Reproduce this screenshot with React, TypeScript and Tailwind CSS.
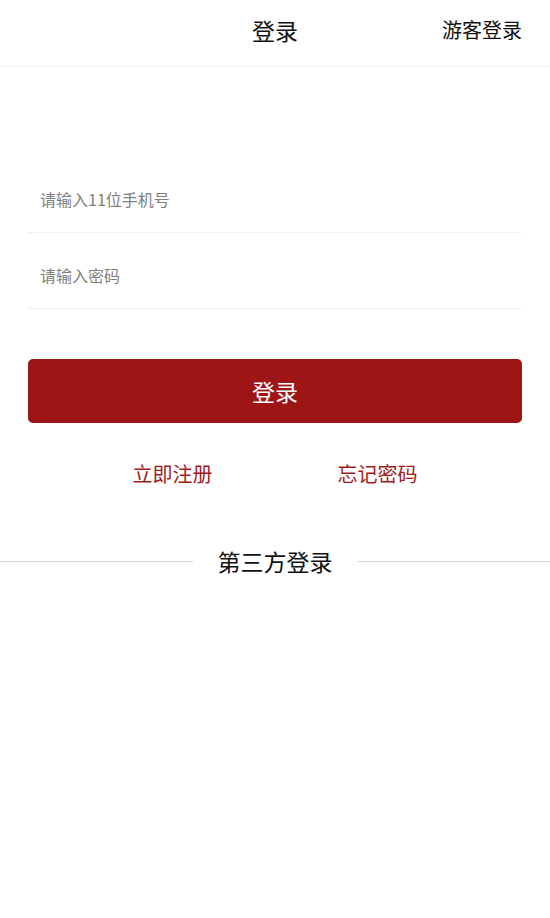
import React from "react";

export default function App() {
  const font = { fontFamily: '"Noto Sans CJK SC", "Noto Sans", sans-serif' };
  return (
    <div className="w-[550px] h-[918px] bg-white text-black" style={font}>
      <div className="h-[67px] border-b border-[#f2f2f2] relative flex items-start justify-center pt-[15px]">
        <span className="text-[23px] leading-[30px] text-[#111]">登录</span>
        <span className="absolute right-[28px] top-[15px] text-[20px] leading-[30px] text-[#111]">游客登录</span>
      </div>
      <div className="px-[28px]">
        <div className="mt-[90px] h-[76px] border-b border-[#f0f0f0] pl-[12px] pt-[30px]">
          <input
            className="w-full outline-none text-[16px] leading-[20px] placeholder:text-[#808080] bg-transparent"
            placeholder="请输入11位手机号"
            style={font}
          />
        </div>
        <div className="h-[76px] border-b border-[#f0f0f0] pl-[12px] pt-[30px]">
          <input
            type="password"
            className="w-full outline-none text-[16px] leading-[20px] placeholder:text-[#808080] bg-transparent"
            placeholder="请输入密码"
            style={font}
          />
        </div>
        <button
          className="mt-[50px] w-full h-[64px] rounded-[5px] bg-[#9d1515] text-white text-[23px] leading-[30px] flex items-center justify-center"
          style={font}
        >
          登录
        </button>
        <div className="mt-[37px] flex justify-center gap-[125px] text-[20px] leading-[28px] text-[#a11d1d]">
          <span>立即注册</span>
          <span>忘记密码</span>
        </div>
      </div>
      <div className="mt-[58px] flex items-center">
        <div className="flex-1 h-px bg-[#d4d4d4]" />
        <span className="px-[25px] text-[23px] leading-[30px] text-[#111]">第三方登录</span>
        <div className="flex-1 h-px bg-[#d4d4d4]" />
      </div>
    </div>
  );
}
